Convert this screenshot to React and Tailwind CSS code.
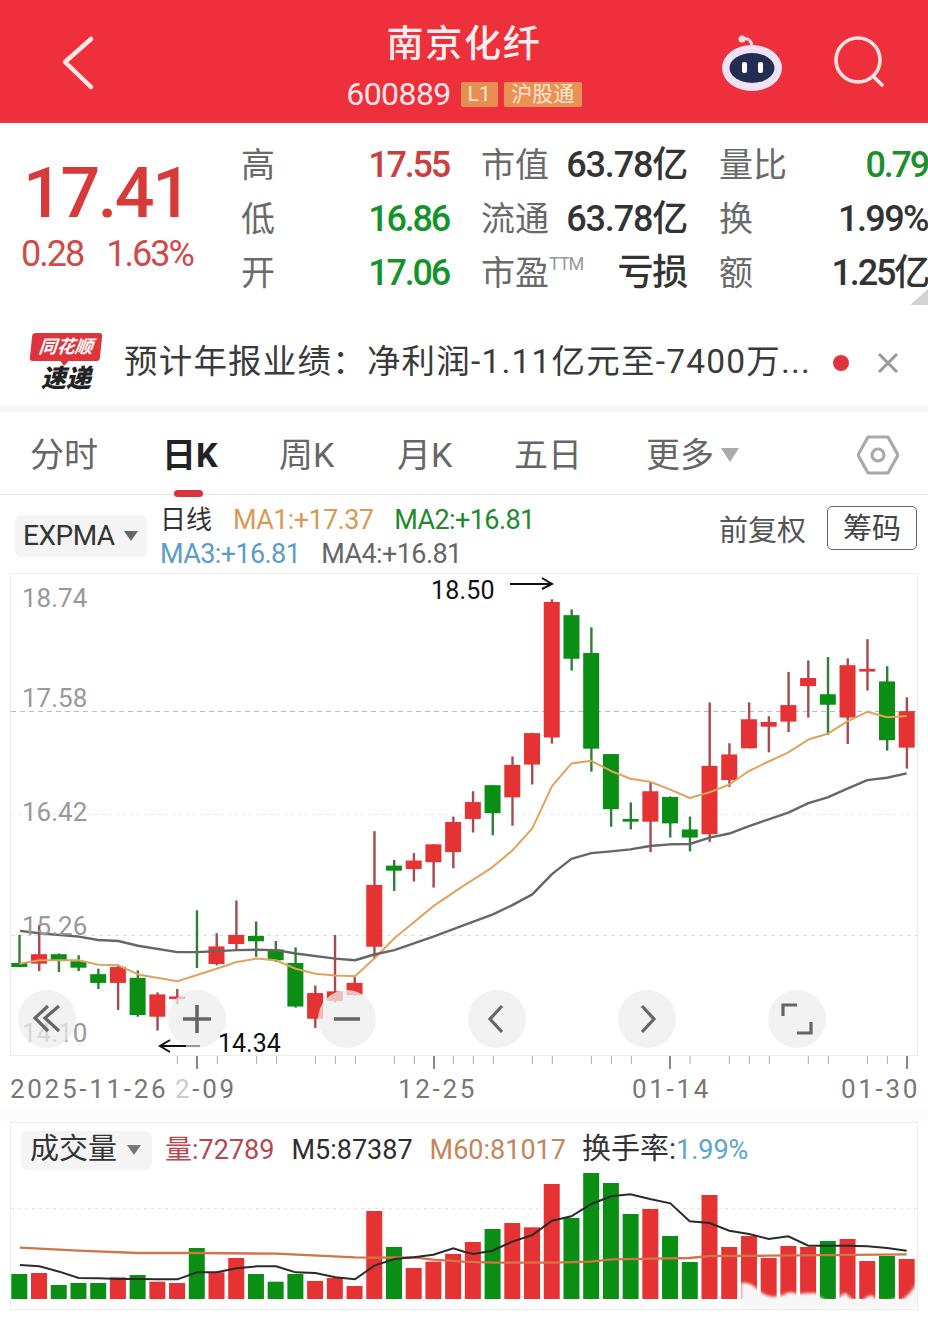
const RED = "#e53232";
const GREEN = "#0a8f14";

// candle values are read off the reference: wick top, wick bottom, body top, body bottom, colour
const candles = [
  [1050, 1145, 1133, 1145, "g"], [1020, 1157, 1107, 1135, "r"], [1105, 1160, 1107, 1125, "g"], [1110, 1157, 1128, 1147, "g"],
  [1150, 1210, 1166, 1192, "g"], [1138, 1272, 1145, 1192, "r"], [1155, 1292, 1177, 1287, "g"], [1220, 1333, 1226, 1292, "r"],
  [1210, 1255, 1232, 1240, "r"], [977, 1148, 1099, 1103, "g"], [1045, 1140, 1084, 1136, "r"], [948, 1095, 1050, 1077, "r"],
  [1010, 1115, 1053, 1069, "g"], [1068, 1130, 1093, 1125, "g"], [1087, 1265, 1133, 1262, "g"], [1200, 1325, 1222, 1298, "r"],
  [1050, 1250, 1217, 1245, "r"], [1170, 1230, 1192, 1228, "r"], [743, 1120, 902, 1085, "r"], [828, 920, 845, 860, "g"],
  [808, 892, 830, 855, "r"], [782, 910, 782, 835, "r"], [700, 853, 716, 805, "r"], [625, 747, 657, 707, "r"],
  [607, 755, 607, 690, "g"], [522, 727, 547, 643, "r"], [452, 605, 453, 546, "r"], [57, 484, 65, 466, "r"],
  [87, 268, 104, 233, "g"], [140, 567, 216, 499, "g"], [515, 730, 515, 678, "g"], [658, 738, 707, 715, "g"],
  [600, 805, 625, 715, "r"], [640, 762, 642, 720, "g"], [700, 803, 738, 762, "g"], [362, 775, 550, 752, "r"],
  [483, 612, 516, 592, "r"], [362, 498, 412, 498, "r"], [403, 510, 420, 434, "r"], [272, 450, 370, 419, "r"],
  [238, 407, 290, 314, "r"], [228, 458, 338, 369, "g"], [232, 485, 252, 407, "r"], [175, 327, 263, 271, "r"],
  [255, 505, 300, 474, "g"], [347, 558, 388, 496, "r"],
];

const volumes = [
  [495, "g"], [492, "r"], [528, "g"], [522, "g"], [522, "g"], [505, "r"], [498, "g"], [518, "r"], [522, "r"], [417, "g"],
  [490, "r"], [447, "r"], [495, "g"], [518, "g"], [495, "g"], [516, "r"], [507, "r"], [531, "r"], [306, "r"], [414, "g"],
  [477, "r"], [458, "r"], [435, "r"], [399, "r"], [360, "g"], [342, "r"], [355, "r"], [225, "r"], [327, "g"], [192, "g"],
  [222, "g"], [315, "g"], [300, "r"], [381, "g"], [459, "g"], [258, "r"], [414, "r"], [381, "r"], [447, "r"], [411, "r"],
  [414, "r"], [396, "g"], [390, "r"], [456, "r"], [441, "g"], [450, "r"],
];

const chartY = (z) => 580 + (z * 530) / 1568;
const volY = (z) => 1110 + z / 3;
const candleX = (i) => 19.3 + 19.72 * i;

const toLine = (left, right, yFn) =>
  [...left.map(([x, y]) => `${x / 3},${yFn(y)}`), ...right.map(([x, y]) => `${464 + x / 3},${yFn(y)}`)].join(" ");

const ma1 = toLine(
  [[58, 1135], [118, 1125], [236, 1125], [295, 1138], [355, 1140], [414, 1167], [532, 1187], [650, 1150], [710, 1130], [770, 1120], [828, 1125], [887, 1150], [946, 1165], [1006, 1170], [1065, 1172], [1123, 1120], [1183, 1060], [1300, 965], [1390, 905]],
  [[85, 850], [145, 800], [205, 735], [264, 610], [322, 543], [382, 535], [441, 565], [499, 588], [558, 597], [619, 620], [677, 645], [737, 628], [796, 605], [855, 565], [914, 537], [973, 510], [1033, 472], [1091, 455], [1150, 418], [1210, 390], [1269, 406], [1328, 402]],
  chartY
);
const ma2 = toLine(
  [[60, 1038], [118, 1045], [236, 1055], [295, 1065], [355, 1068], [414, 1082], [532, 1101], [592, 1101], [710, 1095], [770, 1094], [828, 1095], [887, 1105], [1006, 1120], [1065, 1125], [1123, 1108], [1183, 1095], [1300, 1055], [1390, 1022]],
  [[85, 990], [145, 962], [205, 930], [264, 870], [322, 825], [382, 808], [441, 803], [499, 797], [558, 787], [619, 782], [677, 781], [737, 762], [796, 750], [855, 728], [914, 708], [973, 688], [1033, 660], [1091, 643], [1150, 617], [1210, 592], [1269, 585], [1328, 572]],
  chartY
);
const m5 = toLine(
  [[60, 468], [118, 472], [178, 488], [236, 507], [295, 508], [355, 510], [414, 510], [472, 511], [532, 511], [592, 490], [650, 490], [710, 478], [770, 472], [828, 472], [887, 490], [946, 492], [1006, 505], [1065, 511], [1123, 470], [1183, 450], [1241, 445], [1300, 437], [1360, 418]],
  [[0, 428], [28, 435], [85, 425], [145, 398], [205, 378], [264, 335], [322, 322], [382, 285], [441, 262], [499, 256], [558, 270], [619, 283], [677, 337], [737, 342], [796, 365], [855, 375], [914, 390], [973, 382], [1033, 410], [1091, 410], [1150, 410], [1210, 412], [1269, 417], [1328, 425]],
  volY
);
const m60 = toLine(
  [[60, 416], [236, 425], [414, 432], [592, 432], [828, 434], [1065, 445], [1123, 446], [1241, 445], [1300, 452], [1390, 458]],
  [[85, 461], [264, 461], [382, 458], [441, 451], [677, 447], [737, 441], [914, 440], [1328, 436]],
  volY
);

const minorTicks = [532, 652, 770, 830, 946, 1006, 1066, 1183, 1243, 1360].map((x) => x / 3)
  .concat([28, 88, 205, 265, 382, 442, 502, 678, 796, 856, 916, 1033, 1093, 1210, 1270].map((x) => 464 + x / 3));
const majorTicks = [197, 434, 670, 907];

const stats = [
  { label: "高", value: "17.55", color: "text-[#c9403f]", label2: "市值", value2: "63.78亿", label3: "量比", value3: "0.79", color3: "text-[#1e8f2a] tracking-[-2.2px]" },
  { label: "低", value: "16.86", color: "text-[#14932a]", label2: "流通", value2: "63.78亿", label3: "换", value3: "1.99%", color3: "text-[#333] tracking-[-1.6px]" },
  { label: "开", value: "17.06", color: "text-[#14932a]", label2: "市盈", ttm: true, value2: "亏损", label3: "额", value3: "1.25亿", color3: "text-[#333] tracking-[-2.2px]" },
];

const tabs = [
  { name: "分时", width: "w-[132px]" },
  { name: "日K", width: "w-[117px]", active: true },
  { name: "周K", width: "w-[118px]" },
  { name: "月K", width: "w-[117px]" },
  { name: "五日", width: "w-[132px]" },
];

function Triangle({ className }) {
  return <span className={"inline-block h-0 w-0 border-x-[7px] border-t-[10px] border-x-transparent " + className} />;
}

function RoundButton({ className, children }) {
  return (
    <div className={"absolute top-[416px] flex h-[58px] w-[58px] items-center justify-center rounded-full bg-[#eeeeee]/75 " + className}>
      <svg width="36" height="36" viewBox="0 0 36 36" fill="none" stroke="#666" strokeWidth="3.2">
        {children}
      </svg>
    </div>
  );
}

function Logo() {
  return (
    <div className="flex w-[76px] flex-col items-center">
      <div className="relative flex h-[28px] w-[70px] -skew-x-6 items-center justify-center rounded-[3px] bg-[#e0343c]">
        <span className="text-[18px] font-bold italic leading-none text-white">同花顺</span>
        <span className="absolute -bottom-[5px] left-[30px] h-0 w-0 border-x-[5px] border-t-[6px] border-x-transparent border-t-[#e0343c]" />
      </div>
      <span className="mt-[5px] text-[25px] font-black italic leading-[26px] tracking-[0px] text-[#222]">速递</span>
    </div>
  );
}

function CandleChart() {
  return (
    <svg width="906" height="481" viewBox="11 574 906 481" className="block">
      <line x1="11" x2="917" y1="711.5" y2="711.5" stroke="#bbb" strokeDasharray="5 4" />
      <line x1="11" x2="917" y1="814.5" y2="814.5" stroke="#e8e8e8" strokeDasharray="3 4" />
      <line x1="11" x2="917" y1="935.5" y2="935.5" stroke="#ddd" strokeDasharray="4 4" />
      {candles.map(([wt, wb, bt, bb, c], i) => (
        <g key={i}>
          <rect x={candleX(i) - 1} y={chartY(wt)} width="2.4" height={chartY(wb) - chartY(wt)} fill={c === "r" ? "#a84a50" : "#2f7f38"} />
          <rect x={candleX(i) - 8} y={chartY(bt)} width="16" height={chartY(bb) - chartY(bt)} fill={c === "r" ? RED : GREEN} />
        </g>
      ))}
      <polyline points={ma1} fill="none" stroke="#e0a35c" strokeWidth="2" strokeLinejoin="round" />
      <polyline points={ma2} fill="none" stroke="#666" strokeWidth="2.4" strokeLinejoin="round" />
    </svg>
  );
}

function VolumeChart() {
  return (
    <svg width="906" height="139" viewBox="11 1170 906 139" className="block">
      <defs>
        <filter id="smear" x="-5%" y="-30%" width="110%" height="160%">
          <feGaussianBlur stdDeviation="1.6" />
        </filter>
      </defs>
      <line x1="11" x2="917" y1="1209.5" y2="1209.5" stroke="#e4e4e4" strokeDasharray="3 4" />
      {volumes.map(([top, c], i) => (
        <rect key={i} x={candleX(i) - 8} y={volY(top)} width="16" height={1300 - volY(top)} fill={c === "r" ? RED : GREEN} />
      ))}
      <polyline points={m60} fill="none" stroke="#d0744a" strokeWidth="2.4" />
      <polyline points={m5} fill="none" stroke="#2a2a2a" strokeWidth="2" />
      <path
        d="M741 1309 L741 1284 Q748 1283 755 1288 Q768 1302 783 1296 Q790 1291 797 1295 L812 1294 L816 1294 Q824 1304 836 1302 Q842 1294 846 1294 Q852 1303 862 1302 Q868 1296 872 1296 Q878 1304 890 1302 Q894 1297 900 1302 Q910 1296 917 1284 L917 1309 Z"
        fill="#f7f7f7"
        filter="url(#smear)"
      />
    </svg>
  );
}

export default function App() {
  return (
    <div className="relative h-[1318px] w-[928px] overflow-hidden bg-white font-['Roboto','Noto_Sans_CJK_SC',sans-serif] text-[#333]">
      {/* top bar */}
      <header className="grid h-[123px] grid-cols-[1fr_auto_1fr] items-center border-b border-[#d8434c] bg-[#ee303c] pl-[60px] pr-[42px]">
        <svg className="mt-[4px]" width="36" height="56" viewBox="0 0 36 56" fill="none" stroke="#fde8e8" strokeWidth="4.5" strokeLinecap="round" strokeLinejoin="round">
          <path d="M31 4 L5 27 L31 52" />
        </svg>
        <div className="mr-[18px] flex flex-col items-center pt-[12px] text-white">
          <h1 className="text-[37px] font-medium leading-[46px] tracking-[1.7px] text-[#fdeeee]">南京化纤</h1>
          <div className="mt-[8px] flex items-center">
            <span className="text-[32px] leading-[36px] tracking-[-0.6px] text-[#fbe6e6]">600889</span>
            <span className="ml-[10px] flex h-[25px] w-[37px] items-center justify-center rounded-[2px] bg-[#e68f52] text-[21px] leading-none text-[#fbe6d0]">L1</span>
            <span className="ml-[6px] flex h-[25px] w-[78px] items-center justify-center rounded-[2px] bg-[#ea9255] text-[21px] leading-none text-[#fbe6d0]">沪股通</span>
          </div>
        </div>
        <div className="mt-[4px] flex items-center justify-end gap-[50px]">
          <svg width="64" height="62" viewBox="0 0 64 62" fill="none">
            <path d="M23 9 C24 5 30 6 32 13" stroke="#f3d9e6" strokeWidth="3" />
            <circle cx="22" cy="7" r="3.5" fill="#f6dde8" />
            <ellipse cx="32" cy="36" rx="30" ry="23" fill="#eee3f6" />
            <ellipse cx="32" cy="36" rx="22.5" ry="15" fill="#232c52" />
            <rect x="22" y="30" width="5" height="11" rx="2" fill="#fff" />
            <rect x="38" y="30" width="5" height="11" rx="2" fill="#fff" />
          </svg>
          <svg width="52" height="54" viewBox="0 0 52 54" fill="none" stroke="#fde0e0" strokeWidth="3.6" strokeLinecap="round">
            <circle cx="24" cy="24" r="22" />
            <path d="M39 40 L48 49" />
          </svg>
        </div>
      </header>

      {/* quote block */}
      <section className="relative flex h-[192px] pt-[15px]">
        <div className="flex w-[241px] flex-col pl-[21px]">
          <div className="ml-[2px] mt-[13px] text-[70px] font-medium leading-[84px] tracking-[-2.4px] text-[#d83a3a]">17.41</div>
          <div className="mt-[-1px] flex gap-[23px] text-[36px] leading-[40px] tracking-[-2px] text-[#cf4b4b]">
            <span>0.28</span>
            <span>1.63%</span>
          </div>
        </div>
        <div className="grid h-[162px] grid-cols-[208px_206px_209px] gap-x-[32px]">
          {stats.map((row) => (
            <div key={row.label} className="col-span-3 grid h-[54px] grid-cols-subgrid items-center">
              <div className="flex items-center justify-between">
                <span className="text-[34px] text-[#6a6a6a]">{row.label}</span>
                <span className={"text-[36px] font-medium tracking-[-2.2px] " + row.color}>{row.value}</span>
              </div>
              <div className="flex items-center justify-between">
                <span className="flex items-start text-[34px] text-[#6a6a6a]">
                  {row.label2}
                  {row.ttm && <span className="mt-[4px] text-[18px] leading-[24px] tracking-[-1px] text-[#999]">TTM</span>}
                </span>
                <span className="text-[36px] font-medium tracking-[-1.2px] text-[#333]">{row.value2}</span>
              </div>
              <div className="flex items-center justify-between">
                <span className="text-[34px] text-[#6a6a6a]">{row.label3}</span>
                <span className={"text-[36px] font-medium " + row.color3}>{row.value3}</span>
              </div>
            </div>
          ))}
        </div>
        <span className="absolute bottom-[10px] right-0 h-0 w-0 border-b-[16px] border-l-[18px] border-b-[#d4d4d4] border-l-transparent" />
      </section>

      {/* news ticker */}
      <section className="flex h-[91px] items-center pl-[28px] pt-[4px]">
        <Logo />
        <p className="ml-[20px] w-[709px] whitespace-nowrap text-[33.5px] tracking-[1.2px] text-[#3a3a3a]">预计年报业绩：净利润-1.11亿元至-7400万...</p>
        <span className="h-[16px] w-[16px] rounded-full bg-[#e0343c]" />
        <svg className="ml-[27px]" width="24" height="24" viewBox="0 0 24 24" stroke="#999" strokeWidth="3">
          <path d="M3 3 L21 21 M21 3 L3 21" />
        </svg>
      </section>
      <div className="h-[6px] bg-[#f5f5f5]" />

      {/* period tabs */}
      <nav className="relative flex h-[83px] items-center border-b border-[#e6e6e6] pl-[30px] pt-[4px]">
        {tabs.map((tab) => (
          <div key={tab.name} className={"relative " + tab.width}>
            <span className={tab.active ? "text-[34px] font-bold text-[#222]" : "text-[34px] text-[#666]"}>{tab.name}</span>
            {tab.active && <span className="absolute -bottom-[16px] left-[12px] h-[7px] w-[29px] rounded-full bg-[#d8343e]" />}
          </div>
        ))}
        <span className="text-[34px] text-[#666]">更多</span>
        <Triangle className="ml-[7px] border-x-[9px] border-t-[14px] border-t-[#aaa]" />
        <svg className="ml-[118px]" width="42" height="44" viewBox="0 0 42 44" fill="none" stroke="#aaa" strokeWidth="3.2" strokeLinejoin="round">
          <path d="M11 4 L31 4 L41 22 L31 40 L11 40 L1 22 Z" />
          <circle cx="21" cy="22" r="6" />
        </svg>
      </nav>

      {/* indicator legend */}
      <section className="flex h-[78px] items-center pl-[15px] pr-[11px]">
        <div className="mt-[4px] flex h-[42px] w-[132px] items-center justify-between rounded-[6px] bg-[#f4f4f4] pl-[8px] pr-[9px] text-[28px] tracking-[-0.5px]">
          EXPMA
          <Triangle className="border-t-[#666]" />
        </div>
        <div className="ml-[13px] mt-[6px] flex flex-col text-[27px] leading-[34px] tracking-[-0.6px]">
          <div className="flex gap-[21px]">
            <span className="text-[26px] tracking-normal">日线</span>
            <span className="text-[#d99a55]">MA1:+17.37</span>
            <span className="text-[#1e8a2c]">MA2:+16.81</span>
          </div>
          <div className="flex gap-[21px]">
            <span className="text-[#5c9cc8]">MA3:+16.81</span>
            <span className="text-[#666]">MA4:+16.81</span>
          </div>
        </div>
        <span className="-mt-[4px] ml-auto text-[29px] text-[#555]">前复权</span>
        <button className="-mt-[13px] ml-[21px] h-[44px] w-[90px] rounded-[5px] border border-[#666] pt-[4px] text-[29px] leading-none text-[#444]">筹码</button>
      </section>

      {/* k-line chart */}
      <section className="relative ml-[10px] h-[483px] w-[908px] border border-[#ececec]">
        <CandleChart />
        <span className="absolute left-[11px] top-[9px] text-[26px] leading-[30px] text-[#999]">18.74</span>
        <span className="absolute left-[11px] top-[109px] text-[26px] leading-[30px] text-[#999]">17.58</span>
        <span className="absolute left-[11px] top-[223px] text-[26px] leading-[30px] text-[#999]">16.42</span>
        <span className="absolute left-[11px] top-[337px] text-[26px] leading-[30px] text-[#999]">15.26</span>
        <span className="absolute left-[11px] top-[444px] text-[26px] leading-[30px] text-[#999]">14.10</span>
        <span className="absolute left-[420px] top-[2px] text-[25px] leading-[30px] tracking-[0.2px] text-[#111]">18.50</span>
        <svg className="absolute left-[498px] top-[2px]" width="46" height="16" viewBox="0 0 46 16" fill="none" stroke="#111" strokeWidth="2">
          <path d="M1 8 L43 8 M33 2 L43 8 L33 13" />
        </svg>
        <RoundButton className="left-[7px]">
          <path d="M19 5 L6 17 L19 30 M30 5 L16 17 L30 30" />
        </RoundButton>
        <RoundButton className="left-[157px]">
          <path d="M18 4 L18 32 M4 18 L32 18" strokeWidth="3.6" />
        </RoundButton>
        <RoundButton className="left-[307px]">
          <path d="M5 18 L31 18" strokeWidth="3.6" />
        </RoundButton>
        <RoundButton className="left-[457px]">
          <path d="M23 5 L11 18 L23 31" />
        </RoundButton>
        <RoundButton className="left-[607px]">
          <path d="M13 5 L25 18 L13 31" />
        </RoundButton>
        <RoundButton className="left-[757px]">
          <path d="M4 15 L4 4 L18 4 M32 21 L32 32 L18 32" />
        </RoundButton>
        <span className="absolute left-[207px] top-[455px] text-[25px] leading-[30px] tracking-[0px] text-[#111]">14.34</span>
        <svg className="absolute left-[147px] top-[464px]" width="44" height="16" viewBox="0 0 44 16" fill="none" stroke="#111" strokeWidth="2">
          <path d="M2 8 L28 8 M12 2 L2 8 L12 14" />
          <path d="M28 8 L42 8" stroke="#999" />
        </svg>
      </section>

      {/* time axis */}
      <svg className="block" width="928" height="14" viewBox="0 1056 928 14" stroke="#aaa">
        {minorTicks.map((x) => (
          <line key={x} x1={x} x2={x} y1="1056" y2="1064" strokeWidth="1" />
        ))}
        {majorTicks.map((x) => (
          <line key={x} x1={x} x2={x} y1="1056" y2="1069" strokeWidth="2" stroke="#888" />
        ))}
      </svg>
      <div className="flex h-[38px] items-center pl-[10px] text-[26px] tracking-[2.7px] text-[#777]">
        <span className="w-[165px] whitespace-nowrap">2025-11-26</span>
        <span className="w-[223px]"><span className="text-[#ccc]">2</span>-09</span>
        <span className="w-[234px]">12-25</span>
        <span className="w-[209px]">01-14</span>
        <span>01-30</span>
      </div>
      <div className="h-[14px] bg-[#fcfcfc]" />

      {/* volume chart */}
      <section className="ml-[10px] h-[188px] w-[908px] border border-[#ececec]">
        <div className="flex h-[46px] items-center pl-[10px] pt-[8px] text-[27px]">
          <div className="flex h-[39px] w-[131px] items-center justify-between rounded-[6px] bg-[#f5f5f5] pl-[9px] pr-[11px] text-[29px]">
            成交量
            <Triangle className="border-t-[#777]" />
          </div>
          <span className="ml-[13px] text-[#b5474d]">量:72789</span>
          <span className="ml-[17px] text-[#2e2e2e]">M5:87387</span>
          <span className="ml-[17px] text-[#c4865a]">M60:81017</span>
          <span className="ml-[16px] text-[29px] text-[#333]">换手率:</span>
          <span className="text-[#5aa5cc]">1.99%</span>
        </div>
        <VolumeChart />
      </section>
    </div>
  );
}
